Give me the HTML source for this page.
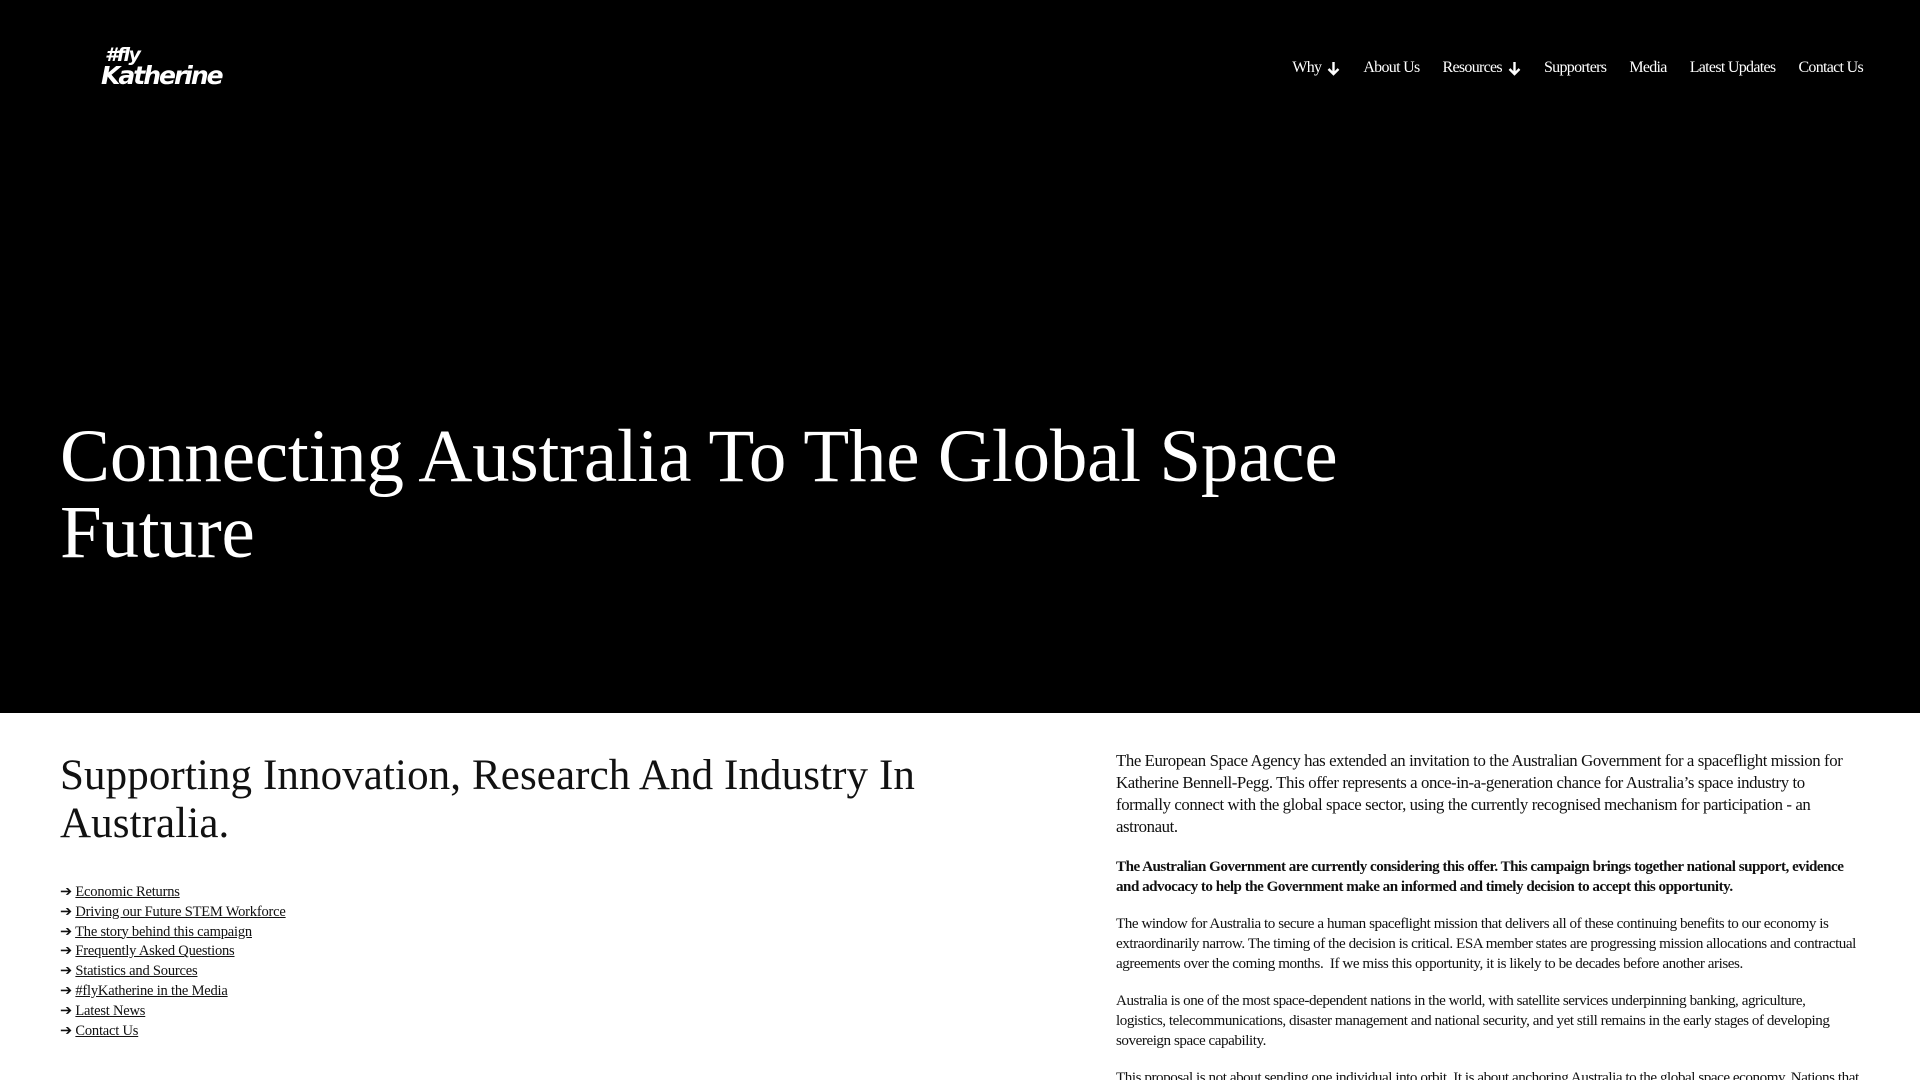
<!DOCTYPE html>
<html><head><meta charset="utf-8"><style>
*{margin:0;padding:0;box-sizing:border-box}
html,body{width:1920px;height:1080px;overflow:hidden}
body{background:#fff;font-family:"Liberation Serif",serif;color:#111;position:relative}
.hero{position:absolute;left:0;top:0;width:1920px;height:713px;background:#000;color:#fff}
.logo{position:absolute;left:101px;top:46px;color:#fff;font-family:"DejaVu Sans",sans-serif;font-style:italic;font-weight:bold;line-height:1}
.logo .a{font-size:19px;display:block;margin-left:4px;letter-spacing:-1.5px}
.logo .b{font-size:25px;display:block;letter-spacing:-2px;margin-top:-2px}
nav{position:absolute;right:57px;top:59px;font-size:16px;letter-spacing:-0.7px;display:flex;gap:23px;color:#fff;align-items:center}
nav span{display:flex;align-items:center}
nav svg{margin-left:6px}
h1{position:absolute;left:60px;top:419px;font-weight:normal;font-size:75px;line-height:76px;width:1400px;letter-spacing:-0.2px}
h2{position:absolute;left:60px;top:752px;font-weight:normal;font-size:43px;line-height:48px;width:900px;letter-spacing:0.1px}
ul{position:absolute;left:60px;top:883px;list-style:none;font-size:14.5px;line-height:19.8px;letter-spacing:-0.2px}
ul a{color:#111;text-decoration:underline}
.r{position:absolute;left:1116px;top:750px;width:748px;letter-spacing:-0.45px}
.r p{font-size:15.1px;line-height:20px;margin-bottom:17px}
.r p.f{font-size:16.8px;line-height:22px;margin-bottom:19px;width:730px;letter-spacing:-0.4px}
.r p.b{letter-spacing:-0.5px}
.r p.n{width:730px}
</style></head><body>
<div class="hero">
<div class="logo"><span class="a">#fly</span><span class="b">Katherine</span></div>
<nav><span>Why<svg width="13" height="15" viewBox="0 0 13 15"><path d="M6.5 1v12M1.5 8l5 5 5-5" stroke="#fff" stroke-width="2.4" fill="none"/></svg></span><span>About Us</span><span>Resources<svg width="13" height="15" viewBox="0 0 13 15"><path d="M6.5 1v12M1.5 8l5 5 5-5" stroke="#fff" stroke-width="2.4" fill="none"/></svg></span><span>Supporters</span><span>Media</span><span>Latest Updates</span><span>Contact Us</span></nav>
<h1>Connecting Australia To The Global Space Future</h1>
</div>
<h2>Supporting Innovation, Research And Industry In Australia.</h2>
<ul>
<li>➔ <a>Economic Returns</a></li>
<li>➔ <a>Driving our Future STEM Workforce</a></li>
<li>➔ <a>The story behind this campaign</a></li>
<li>➔ <a>Frequently Asked Questions</a></li>
<li>➔ <a>Statistics and Sources</a></li>
<li>➔ <a>#flyKatherine in the Media</a></li>
<li>➔ <a>Latest News</a></li>
<li>➔ <a>Contact Us</a></li>
</ul>
<div class="r">
<p class="f">The European Space Agency has extended an invitation to the Australian Government for a spaceflight mission for Katherine Bennell-Pegg. This offer represents a once-in-a-generation chance for Australia’s space industry to formally connect with the global space sector, using the currently recognised mechanism for participation - an astronaut.</p>
<p class="b"><b>The Australian Government are currently considering this offer. This campaign brings together national support, evidence and advocacy to help the Government make an informed and timely decision to accept this opportunity.</b></p>
<p>The window for Australia to secure a human spaceflight mission that delivers all of these continuing benefits to our economy is extraordinarily narrow. The timing of the decision is critical. ESA member states are progressing mission allocations and contractual agreements over the coming months.&nbsp; If we miss this opportunity, it is likely to be decades before another arises.</p>
<p class="n">Australia is one of the most space-dependent nations in the world, with satellite services underpinning banking, agriculture, logistics, telecommunications, disaster management and national security, and yet still remains in the early stages of developing sovereign space capability.</p>
<p>This proposal is not about sending one individual into orbit. It is about anchoring Australia to the global space economy. Nations that participate in human spaceflight gain access to networks, contracts and expertise.</p>
</div>
</body></html>
